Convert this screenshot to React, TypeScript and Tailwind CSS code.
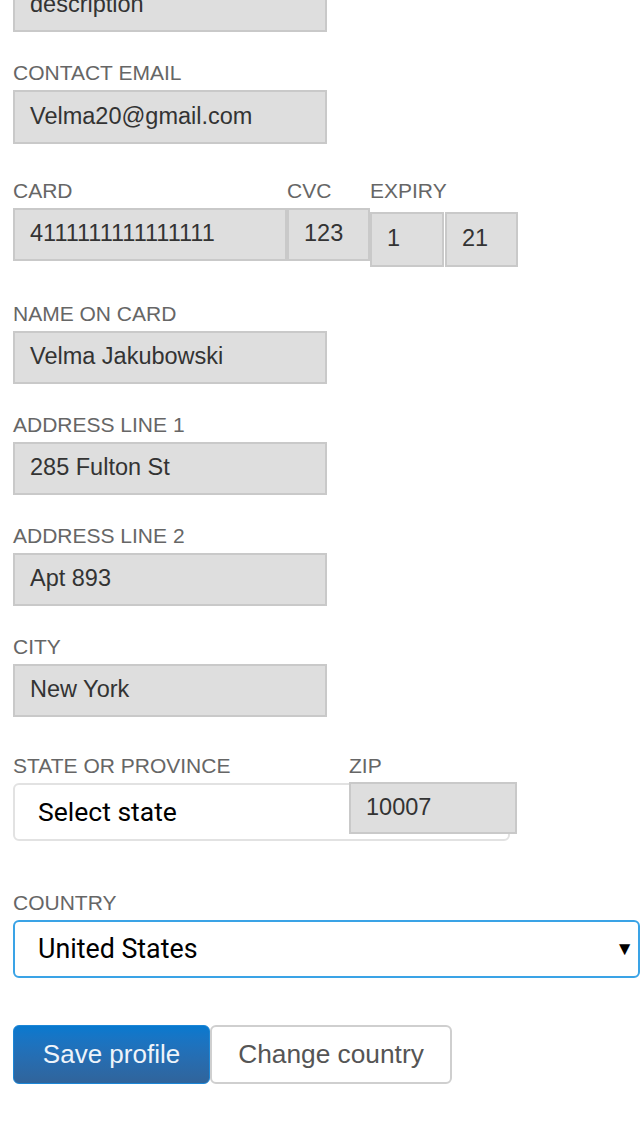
import React from 'react';

const font = { fontFamily: '"Liberation Sans", Arial, sans-serif' };

const Label = ({ children, className = '' }: { children: React.ReactNode; className?: string }) => (
  <div className={`text-[21px] leading-[24px] text-[#666] mb-[5px] ${className}`}>{children}</div>
);

const Box = ({ value, className = '' }: { value: string; className?: string }) => (
  <div
    className={`flex items-center pl-[15px] bg-[#dedede] border-2 border-[#c9c9c9] text-[23.5px] text-[#333] shrink-0 ${className}`}
  >
    <span className="-mt-[1px]">{value}</span>
  </div>
);

const App = () => {
  const fields = [
    { label: 'NAME ON CARD', value: 'Velma Jakubowski', mt: 'mt-[35px]' },
    { label: 'ADDRESS LINE 1', value: '285 Fulton St', mt: 'mt-[29px]' },
    { label: 'ADDRESS LINE 2', value: 'Apt 893', mt: 'mt-[29px]' },
    { label: 'CITY', value: 'New York', mt: 'mt-[29px]' },
  ];

  return (
    <div className="w-[640px] h-[1136px] overflow-hidden bg-white px-[13px]" style={font}>
      <Box value="description" className="w-[314px] h-[54px] -mt-[22px]" />

      <div className="mt-[29px]">
        <Label>CONTACT EMAIL</Label>
        <Box value="Velma20@gmail.com" className="w-[314px] h-[54px]" />
      </div>

      <div className="mt-[35px] flex">
        <div>
          <Label>CARD</Label>
          <Box value="4111111111111111" className="w-[274px] h-[53px]" />
        </div>
        <div>
          <Label>CVC</Label>
          <Box value="123" className="w-[83px] h-[53px]" />
        </div>
        <div>
          <Label>EXPIRY</Label>
          <div className="flex gap-[1px] pt-[4px]">
            <Box value="1" className="w-[74px] h-[55px]" />
            <Box value="21" className="w-[73px] h-[55px]" />
          </div>
        </div>
      </div>

      {fields.map((f) => (
        <div key={f.label} className={f.mt}>
          <Label>{f.label}</Label>
          <Box value={f.value} className="w-[314px] h-[53px]" />
        </div>
      ))}

      <div className="mt-[37px] flex">
        <div>
          <Label>STATE OR PROVINCE</Label>
          <div
            className="w-[497px] h-[58px] flex items-center pl-[23px] bg-white border-2 border-[#e2e2e2] rounded-[6px] text-[26.5px] text-black"
            style={{ fontFamily: 'Roboto, "Liberation Sans", sans-serif' }}
          >
            Select state
          </div>
        </div>
        <div className="-ml-[161px] relative">
          <Label className="!mb-[4px]">ZIP</Label>
          <Box value="10007" className="w-[168px] h-[52px]" />
        </div>
      </div>

      <div className="mt-[50px]">
        <Label>COUNTRY</Label>
        <div
          className="w-[627px] h-[58px] flex items-center justify-between pl-[23px] pr-[4px] bg-white border-2 border-[#3aa3e6] rounded-[6px] text-[26.8px] text-black"
          style={{ fontFamily: 'Roboto, "Liberation Sans", sans-serif' }}
        >
          <span>United States</span>
          <span className="text-[19px]">▼</span>
        </div>
      </div>

      <div className="mt-[47px] flex">
        <button className="w-[197px] h-[59px] rounded-[6px] border border-[#1c86d6] bg-gradient-to-b from-[#0779cf] to-[#30649b] text-[26px] text-[#eef4fa]">
          Save profile
        </button>
        <button className="w-[242px] h-[59px] rounded-[6px] border-2 border-[#cfcfcf] bg-white text-[26.3px] text-[#555]">
          Change country
        </button>
      </div>
    </div>
  );
};

export default App;
